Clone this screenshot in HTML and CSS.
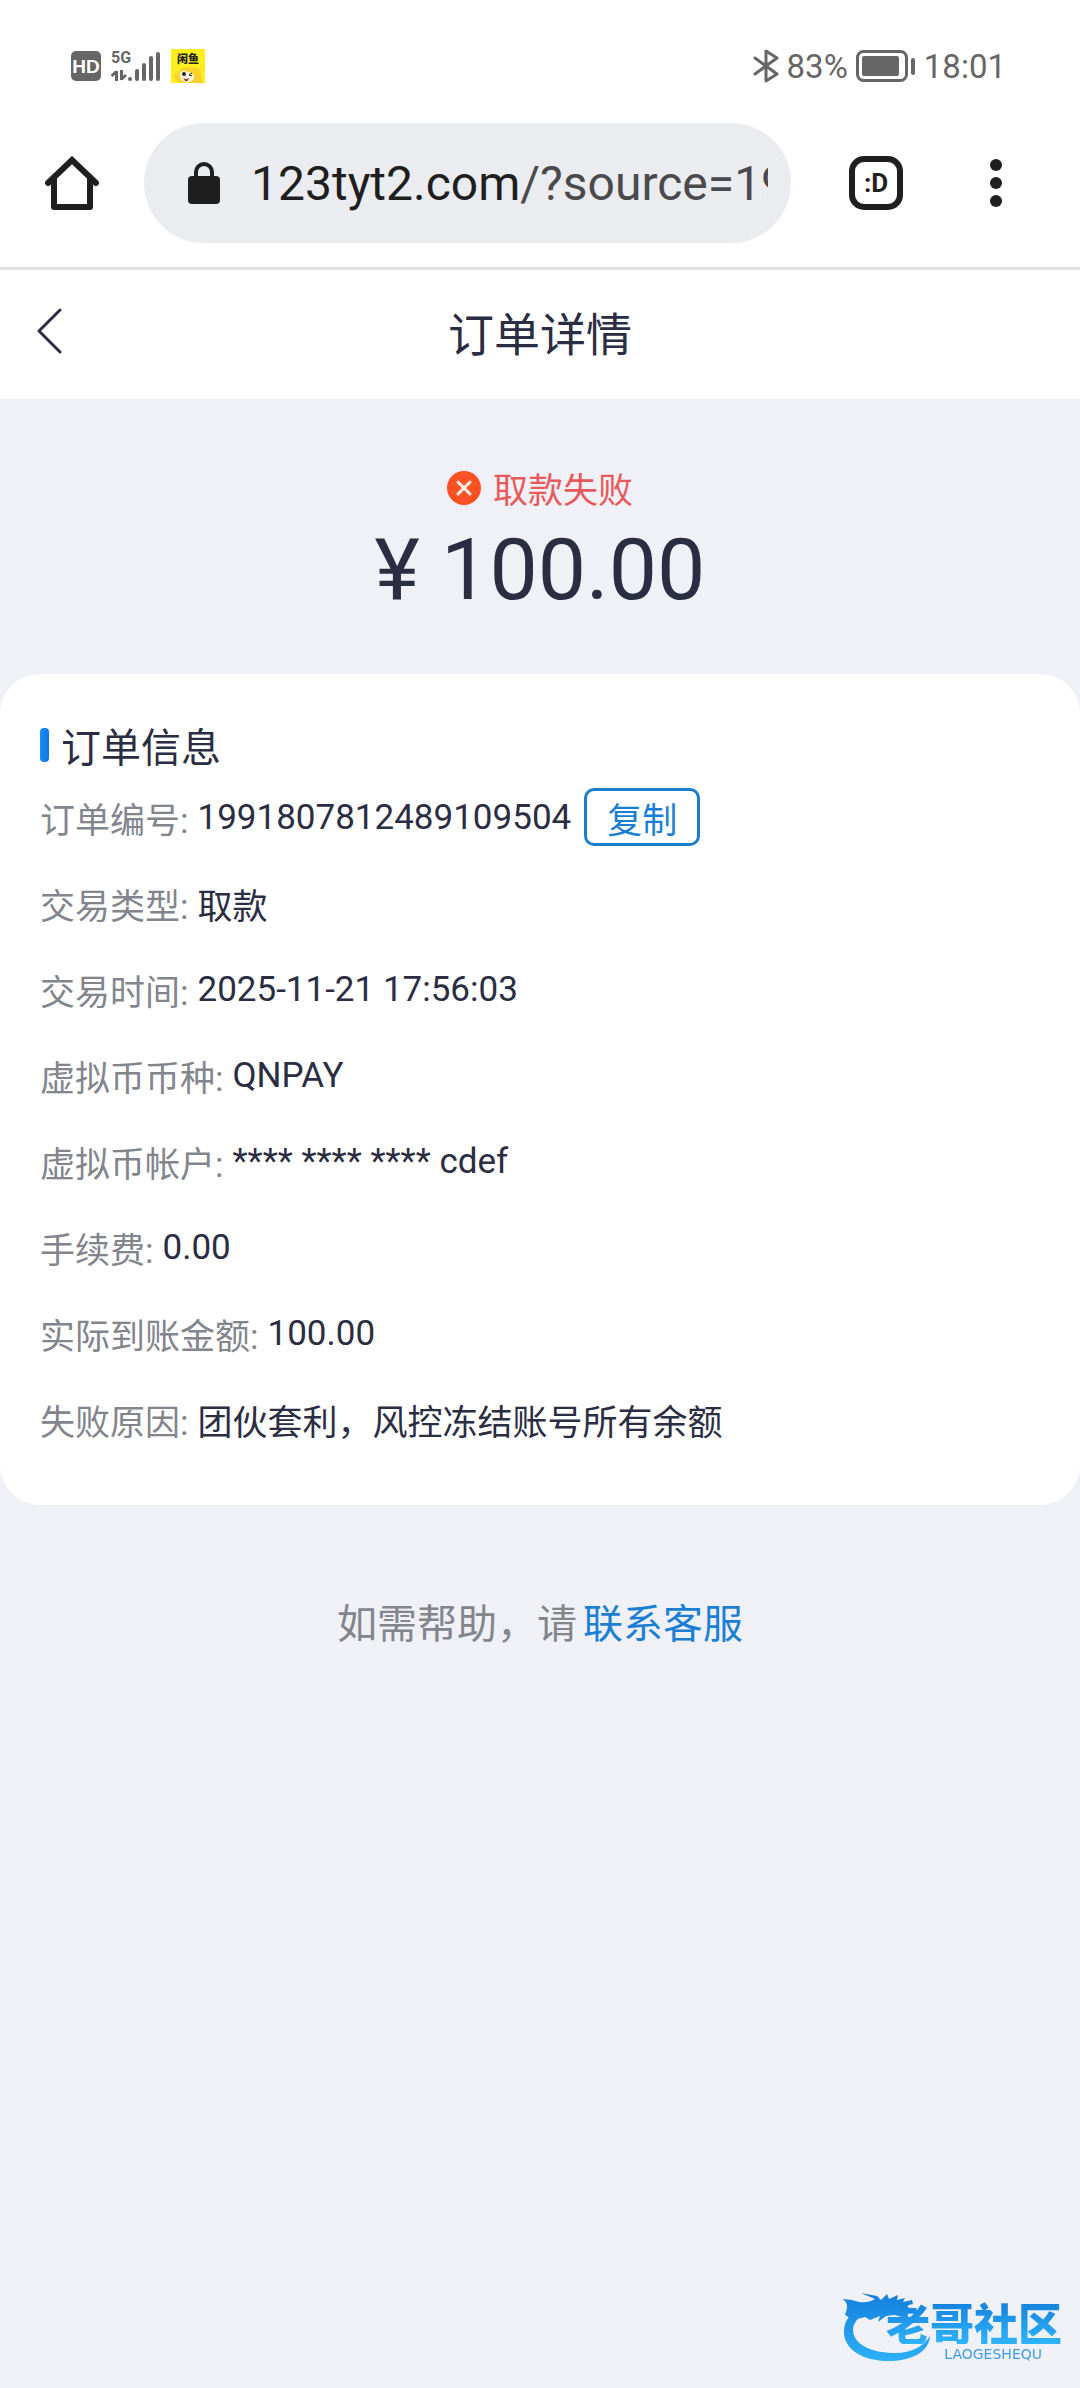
FILE: index.html
```html
<!DOCTYPE html>
<html lang="zh-CN">
<head>
<meta charset="utf-8">
<meta name="viewport" content="width=device-width, initial-scale=1">
<title>订单详情</title>
<link rel="stylesheet" href="styles.css">
</head>
<body>
<div class="status-bar">
  <div class="status-group">
    <svg width="30" height="30" viewBox="0 0 30 30" aria-hidden="true">
      <rect width="30" height="30" rx="5" fill="#666"/>
      <text class="hd-text" x="15" y="22" text-anchor="middle">HD</text>
    </svg>
    <svg class="signal" width="50" height="32" viewBox="0 0 50 32" aria-hidden="true">
      <text class="net-text" x="0" y="13">5G</text>
      <g stroke="#666" stroke-width="4" stroke-linecap="round" fill="none">
        <path d="M19 29v0M26 21v8M33 15v14M40 8v21M47 4v25"/>
        <path stroke-width="3" stroke-linecap="butt" d="M5.500 21v10M0.500 26l5-4.500M10.500 20v10M15 25l-5 4.500"/>
      </g>
    </svg>
    <svg width="34" height="34" viewBox="0 0 34 34" aria-hidden="true">
      <rect width="34" height="34" fill="#ffef1f"/>
      <path d="M9 34c-5-3-7-6-6-9 3 1 5 0 5-2 2-5 7-6 12-4 6-2 11 2 10 8l2 7z" fill="#fbd12c"/>
      <path d="M9 26q0-5 5-4l6 2q5 3 2 7-4 3-9 2-4-2-4-7z" fill="#fff8dc"/>
      <circle cx="13" cy="25" r="2" fill="#222"/>
      <path d="M21 24l-3 2 3 1" fill="none" stroke="#222" stroke-width="1"/>
      <path d="M12 29q3 2 6 0-1 4-4 3z" fill="#a8322a"/>
      <text class="app-text" x="17" y="14" text-anchor="middle">闲鱼</text>
    </svg>
  </div>
  <div class="status-group status-right">
    <svg width="26" height="34" viewBox="0 0 26 34" fill="none" stroke="#666" stroke-width="3" stroke-linejoin="round" stroke-linecap="round" aria-hidden="true"><path d="M2 9l22 16-11 7V2l11 7L2 25"/></svg>
    <span>83%</span>
    <svg class="battery" width="60" height="32" viewBox="0 0 60 32" aria-hidden="true">
      <rect x="1.500" y="1.500" width="49" height="29" rx="6" fill="none" stroke="#666" stroke-width="3"/>
      <rect x="6" y="6" width="37" height="20" rx="2" fill="#666"/>
      <rect x="55" y="8" width="4" height="17" rx="2" fill="#666"/>
    </svg>
    <span>18:01</span>
  </div>
</div>

<div class="toolbar">
  <button class="icon-button" type="button" aria-label="主页">
    <svg width="54" height="54" viewBox="0 0 54 54" fill="none" stroke="#1f1f1f" stroke-width="6" aria-hidden="true"><path d="M3 27L27 4l24 23" stroke-linecap="round"/><path d="M9 23v28h36V23" stroke-linejoin="round"/></svg>
  </button>
  <button class="address" type="button">
    <svg class="lock" width="32" height="42" viewBox="0 0 32 42" aria-hidden="true"><rect y="14" width="32" height="28" rx="4" fill="#1f1f1f"/><path d="M8 16v-6a8 8 0 0 1 16 0v6" fill="none" stroke="#1f1f1f" stroke-width="4"/></svg>
    <span class="url">123tyt2.com<span class="url-path">/?source=19</span></span>
  </button>
  <button class="icon-button tabs" type="button">:D</button>
  <button class="icon-button" type="button" aria-label="菜单">
    <svg width="12" height="48" viewBox="0 0 12 48" fill="#1f1f1f" aria-hidden="true"><circle cx="6" cy="6" r="6"/><circle cx="6" cy="24" r="6"/><circle cx="6" cy="42" r="6"/></svg>
  </button>
</div>

<header class="page-header">
  <button class="icon-button" type="button" aria-label="返回">
    <svg width="26" height="46" viewBox="0 0 26 46" fill="none" stroke="#2b2d42" stroke-width="3" stroke-linecap="round" stroke-linejoin="round" aria-hidden="true"><path d="M24 2L3 23l21 21"/></svg>
  </button>
  <h1 class="page-title">订单详情</h1>
</header>

<main>
  <section class="summary">
    <p class="result">
      <svg width="34" height="34" viewBox="0 0 34 34" aria-hidden="true"><circle cx="17" cy="17" r="17" fill="#fb5122"/><path d="M11 11l12 12M23 11L11 23" stroke="#fff3e6" stroke-width="3" stroke-linecap="round"/></svg>
      <span>取款失败</span>
    </p>
    <p class="amount">¥ 100.00</p>
  </section>

  <section class="card">
    <h2 class="card-title">订单信息</h2>
    <dl class="details">
      <div class="row"><dt>订单编号:</dt><dd>1991807812489109504</dd><dd><button class="copy" type="button">复制</button></dd></div>
      <div class="row"><dt>交易类型:</dt><dd>取款</dd></div>
      <div class="row"><dt>交易时间:</dt><dd>2025-11-21 17:56:03</dd></div>
      <div class="row"><dt>虚拟币币种:</dt><dd>QNPAY</dd></div>
      <div class="row"><dt>虚拟币帐户:</dt><dd>**** **** **** cdef</dd></div>
      <div class="row"><dt>手续费:</dt><dd>0.00</dd></div>
      <div class="row"><dt>实际到账金额:</dt><dd>100.00</dd></div>
      <div class="row"><dt>失败原因:</dt><dd>团伙套利，风控冻结账号所有余额</dd></div>
    </dl>
  </section>

  <p class="help"><span>如需帮助，请</span><a class="help-link" href="#support">联系客服</a></p>
</main>

<div class="watermark">
  <svg class="dragon" width="90" height="74" viewBox="0 0 90 74" aria-hidden="true">
    <defs><linearGradient id="swoosh" x1="0" y1="0" x2="0" y2="74" gradientUnits="userSpaceOnUse"><stop offset="0" stop-color="#137fdc"/><stop offset="1" stop-color="#2fb4fa"/></linearGradient></defs>
    <g fill="url(#swoosh)">
      <path d="M34 9C14 14 2 25 2 40c0 18 20 30 48 29 22-1 37-10 38-25-6 10-18 17-35 17-24 0-42-9-42-23 0-9 8-16 22-20z"/>
      <path d="M0 7q9 0 17 3 6 1 12-1l4-2-14-6 16 3 4 4 6-6 2 5 9-4-1 5 8-2-2 4 9-2 1 4-8 2 7 3-2 3-8-1 6 4-3 3-10-3-9 1-8 6 2-6-10 4-5-3q-12 4-20-2Q8 10 0 7z"/>
    </g>
  </svg>
  <div class="brand">
    <span class="brand-name">老哥社区</span>
    <span class="brand-latin">LAOGESHEQU</span>
  </div>
</div>
</body>
</html>
```
FILE: styles.css
```css
* {
  box-sizing: border-box;
}

body {
  margin: 0;
  min-height: 100vh;
  background: #eff1f6;
  color: #2b2d42;
  font-family: Roboto, "Noto Sans CJK SC", sans-serif;
  font-size: 35px;
}

h1, h2, p, dl, dd {
  margin: 0;
  font-weight: 400;
}

button {
  padding: 0;
  border: 0;
  background: none;
  color: inherit;
  font: inherit;
}

svg {
  display: block;
  flex: none;
}

/* Phone status bar */
.status-bar {
  display: flex;
  align-items: center;
  justify-content: space-between;
  height: 99px;
  padding: 33px 74px 0 71px;
  background: #fff;
  color: #666;
  font-size: 33px;
}

.status-group {
  display: flex;
  align-items: center;
  gap: 10px;
}

.status-right {
  gap: 8px;
}

.hd-text {
  fill: #fff;
  font: 700 19px "Liberation Sans", sans-serif;
}

.net-text {
  fill: #666;
  font: 700 16px Roboto, sans-serif;
}

.app-text {
  fill: #222;
  font: 900 11px "Noto Sans CJK SC", sans-serif;
}

/* Browser toolbar */
.toolbar {
  display: flex;
  align-items: center;
  height: 171px;
  padding: 0 78px 0 45px;
  border-bottom: 3px solid #e0e0e0;
  background: #fff;
  color: #1f1f1f;
}

.icon-button {
  flex: none;
}

.address {
  display: flex;
  flex: 1;
  align-items: center;
  gap: 31px;
  min-width: 0;
  height: 120px;
  margin: 0 58px 0 45px;
  padding: 0 23px 0 44px;
  border-radius: 60px;
  background: #ebecf0;
  font-size: 48px;
  text-align: left;
}

.url {
  flex: 1;
  min-width: 0;
  overflow: hidden;
  white-space: nowrap;
}

.url-path {
  color: #4a4a4c;
}

.tabs {
  width: 54px;
  height: 54px;
  margin-right: 87px;
  border: 6px solid #1f1f1f;
  border-radius: 15px;
  font-size: 26px;
  font-weight: 700;
}

/* Page header */
.page-header {
  display: grid;
  grid-template-columns: 1fr auto 1fr;
  align-items: center;
  justify-items: start;
  height: 129px;
  padding: 0 36px 8px;
  background: #fff;
}

.page-title {
  font-size: 46px;
}

/* Result and amount */
.summary {
  display: flex;
  flex-direction: column;
  align-items: center;
  gap: 6px;
  padding: 63px 40px 54px;
}

.result {
  display: flex;
  align-items: center;
  gap: 12px;
  color: #e8595c;
}

.amount {
  font-size: 86px;
}

/* Order card */
.card {
  padding: 42px 40px 57px;
  border-radius: 40px;
  background: #fff;
}

.card-title {
  display: flex;
  align-items: center;
  gap: 12px;
  margin-bottom: 14px;
  font-size: 40px;
}

.card-title::before {
  width: 9px;
  height: 34px;
  border-radius: 4px;
  background: linear-gradient(90deg, #1a8ff5, #0f75e6);
  content: "";
}

.details {
  display: grid;
  gap: 28px;
}

.row {
  display: flex;
  align-items: center;
  gap: 9px;
  min-height: 58px;
}

dt {
  color: #83858d;
}

.copy {
  display: block;
  height: 58px;
  margin-left: 4px;
  padding: 0 20px;
  border: 3px solid #1a7fcb;
  border-radius: 10px;
  color: #1a7fd4;
}

/* Help line */
.help {
  display: flex;
  justify-content: center;
  gap: 6px;
  padding: 87px 40px;
  color: #83858d;
  font-size: 40px;
}

.help-link {
  color: #1a7fd4;
  text-decoration: none;
}

/* Community logo over the page corner */
.watermark {
  position: fixed;
  right: 18px;
  bottom: 22px;
  display: flex;
  align-items: flex-start;
}

.dragon {
  margin-right: -46px;
}

.brand {
  display: flex;
  flex-direction: column;
  align-items: flex-end;
  gap: 3px;
  padding-top: 8px;
}

.brand-name {
  background: linear-gradient(#137fdc, #2fb4fa);
  background-clip: text;
  color: transparent;
  font: 900 44px/44px "Noto Sans CJK SC", sans-serif;
}

.brand-latin {
  margin-right: 20px;
  color: #3f9be2;
  font: 400 14px/14px "DejaVu Sans", sans-serif;
}
```
